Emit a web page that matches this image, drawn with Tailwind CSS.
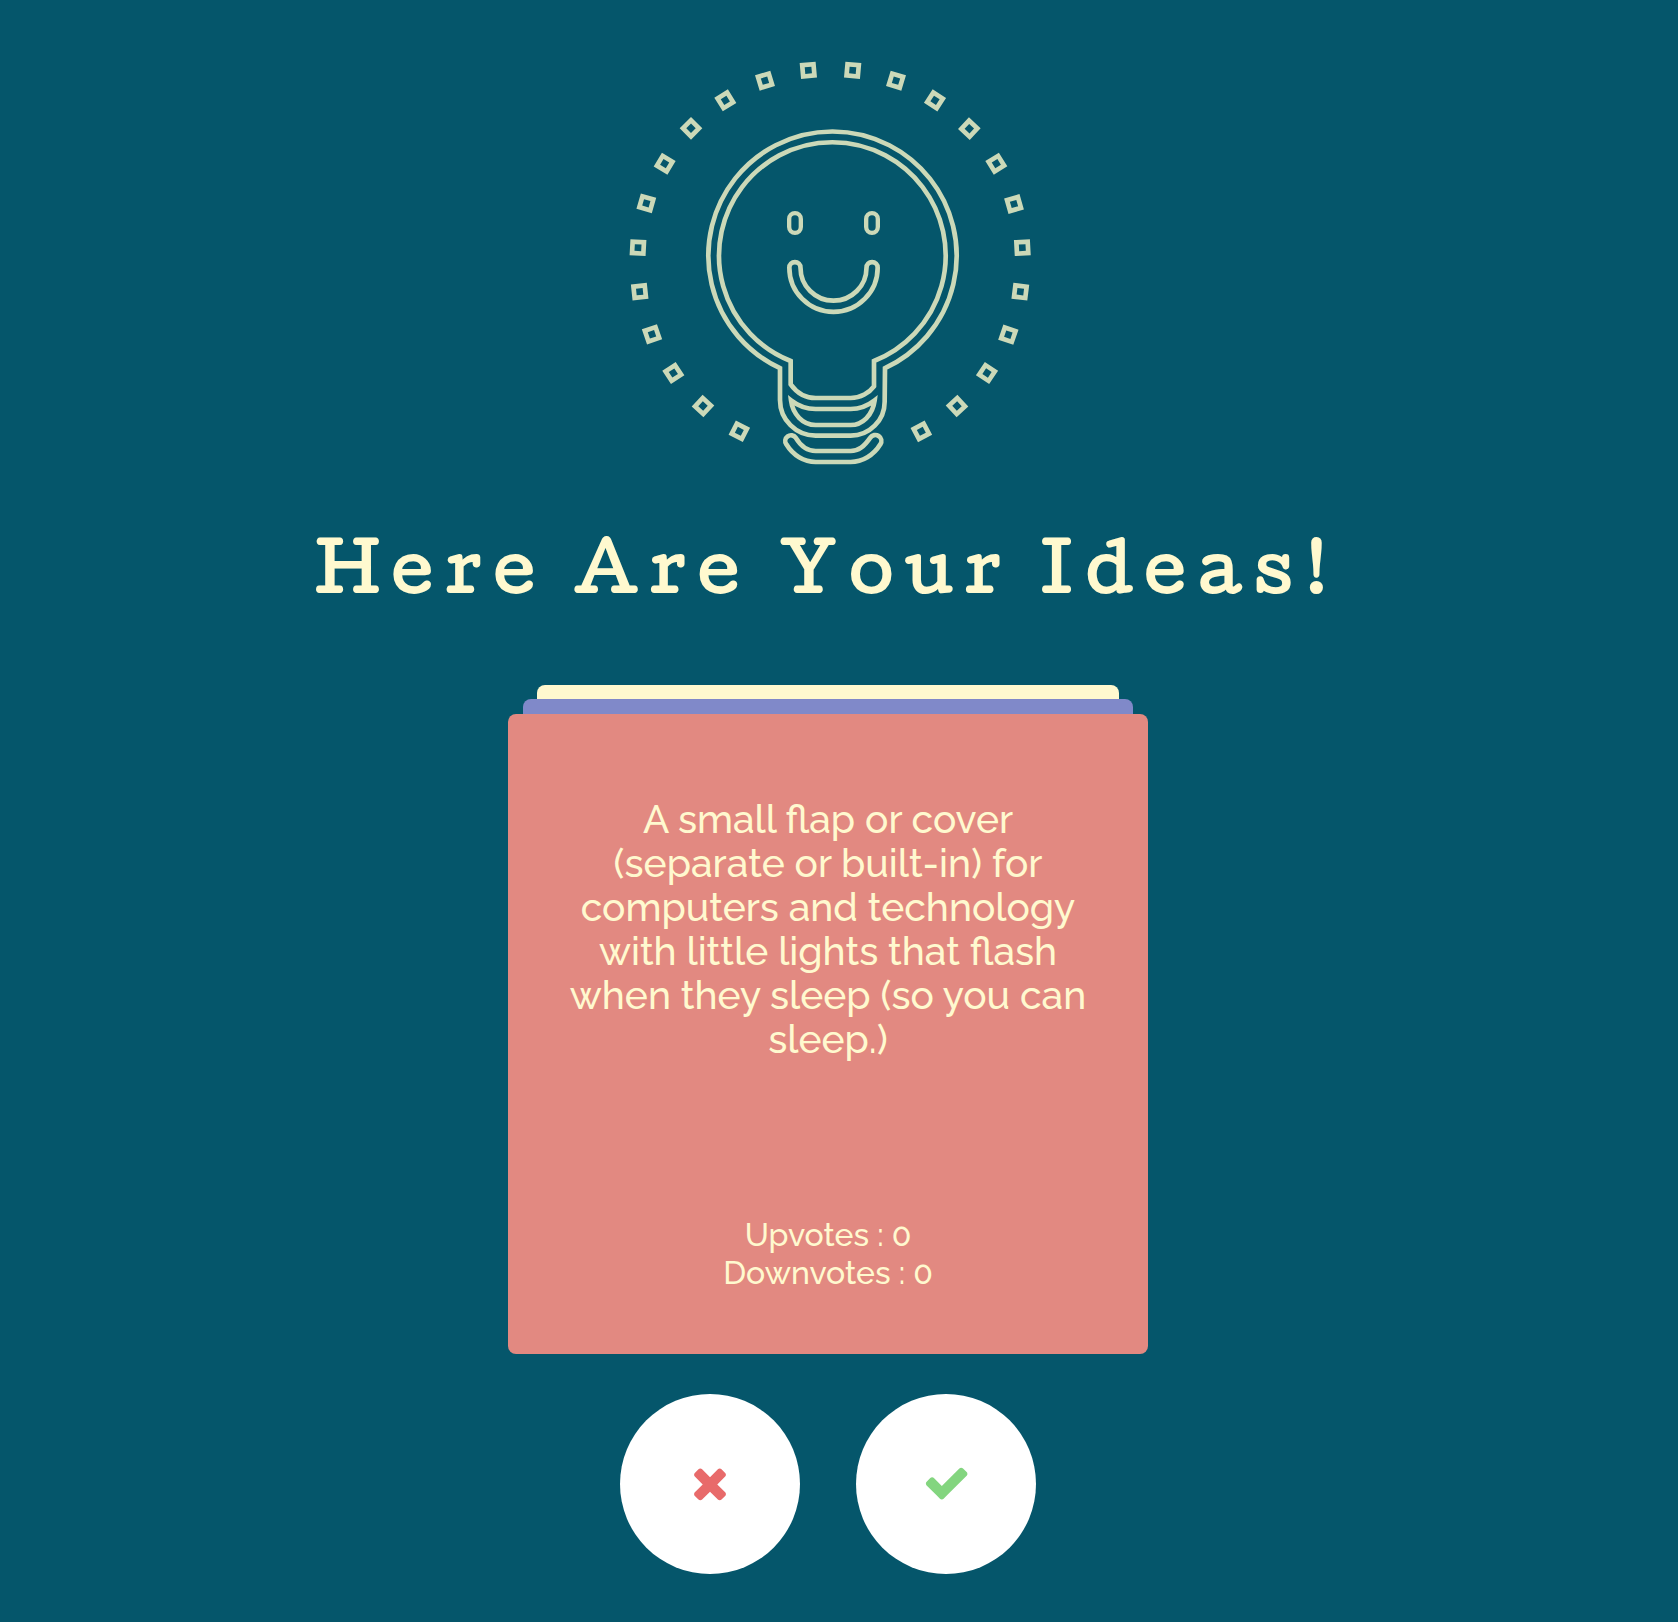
<!DOCTYPE html>
<html lang="en">
<head>
  <meta charset="UTF-8" />
  <meta name="viewport" content="width=device-width, initial-scale=1.0"/>
  <title>Here Are Your Ideas!</title>
  <script src="https://cdn.jsdelivr.net/npm/@tailwindcss/browser@4"></script>
</head>
<body class="bg-[#05566b] min-h-screen flex flex-col items-center pt-10 pr-[22px] pb-12 border-b border-[#04465c] text-[#fff9cf] font-medium font-[Raleway,Lato,sans-serif]">

  <!-- Logo -->
  <svg class="w-[436px] max-w-full" viewBox="0 0 1308 1320" fill="none" stroke="#ccd9b8" stroke-width="14" role="img" aria-label="Smiling light bulb">
    <!-- Bulb -->
    <path d="M510 984.6A372.5 372.5 0 1 1 825 984.6L824 1085A102 102 0 0 1 722 1187H617A107 107 0 0 1 510 1080Z"/>
    <path d="M542 963A340 340 0 1 1 792 963V1039C778 1058 752 1074 722 1074H617C587 1074 560 1058 542 1033Z"/>
    <path d="M543 1081C565 1098 590 1107 617 1107H722C747 1107 772 1098 794 1081C788 1126 757 1155 722 1155H617C578 1155 548 1122 543 1081Z"/>
    <path d="M557 1193C573 1220 592 1233 617 1233H722C746 1233 762 1220 781 1193A17 17 0 0 1 811 1213C791 1246 757 1266 722 1266H617C582 1266 549 1246 529 1213A17 17 0 0 1 557 1193Z"/>
    <!-- Face -->
    <rect x="537.5" y="519.5" width="35" height="59" rx="17.5" stroke-width="13"/>
    <rect x="768.5" y="519.5" width="35" height="59" rx="17.5" stroke-width="13"/>
    <path d="M538 683A16.5 16.5 0 0 1 571.5 683A99 99 0 0 0 769.5 683A16.5 16.5 0 0 1 803 683A132.5 132.5 0 0 1 538 683Z"/>
    <!-- Rays -->
    <g id="rays"></g>
  </svg>

  <h1 class="mt-10 text-[64px] leading-[92px] tracking-[0.2em] text-center font-bold font-[Cutive,'DejaVu_Serif',serif]">Here Are Your Ideas!</h1>

  <!-- Idea Cards -->
  <main class="mt-[73px] w-full max-w-[640px] flex flex-col items-center">
    <div class="w-[582px] max-w-[91%] h-[14px] rounded-t-lg bg-[#fff9cf]"></div>
    <div class="w-[610px] max-w-[96%] h-[15px] rounded-t-lg bg-[#8089c9]"></div>
    <article class="w-full min-h-[640px] rounded-lg bg-[#e28981] px-14 pt-[83px] pb-[62px] flex flex-col justify-between text-center">
      <p class="text-[39px] leading-[44px]">A small flap or cover (separate or built-in) for computers and technology with little lights that flash when they sleep (so you can sleep.)</p>
      <div class="text-[32px] leading-[38px]">
        <p>Upvotes : <span id="upvotes">0</span></p>
        <p>Downvotes : <span id="downvotes">0</span></p>
      </div>
    </article>
  </main>

  <!-- Vote Buttons -->
  <div class="mt-10 flex gap-14">
    <button id="down-btn" type="button" aria-label="Downvote" class="size-[180px] rounded-full bg-white text-[#e86a6a] flex items-center justify-center cursor-pointer">
      <svg class="size-12" viewBox="0 48 1792 1792" fill="currentColor"><path d="M1490 1322q0 40-28 68l-136 136q-28 28-68 28t-68-28l-294-294-294 294q-28 28-68 28t-68-28l-136-136q-28-28-28-68t28-68l294-294-294-294q-28-28-28-68t28-68l136-136q28-28 68-28t68 28l294 294 294-294q28-28 68-28t68 28l136 136q28 28 28 68t-28 68l-294 294 294 294q28 28 28 68z"/></svg>
    </button>
    <button id="up-btn" type="button" aria-label="Upvote" class="size-[180px] rounded-full bg-white text-[#83d57f] flex items-center justify-center cursor-pointer">
      <svg class="size-12" viewBox="-24 48 1792 1792" fill="currentColor"><path d="M1671 566q0 40-28 68l-724 724-136 136q-28 28-68 28t-68-28l-136-136-362-362q-28-28-28-68t28-68l136-136q28-28 68-28t68 28l294 295 656-657q28-28 68-28t68 28l136 136q28 28 28 68z"/></svg>
    </button>
  </div>

  <script>
    // x, y, rotation of each ray around the bulb
    const rays = [
      [388, 1174, 27], [279, 1098, 43], [190, 999, -33], [126, 883, -19], [89, 755, -6],
      [84, 623, 3], [109, 490, 16], [164, 371, 31], [243, 265, 45], [346, 181, -32],
      [465, 122, -17], [595, 91, -5], [728, 91, 5], [858, 122, 17], [975, 181, 33],
      [1078, 266, 43], [1159, 371, -32], [1212, 492, -16], [1237, 623, -3], [1231, 755, 7],
      [1195, 884, 19], [1131, 999, 34], [1041, 1098, -43], [934, 1174, -28]
    ];

    document.getElementById("rays").innerHTML = rays.map(([x, y, r]) =>
      `<rect x="${x - 17}" y="${y - 17}" width="34" height="34" transform="rotate(${r} ${x} ${y})"/>`
    ).join("");

    function addVote(id) {
      const count = document.getElementById(id);
      count.textContent = Number(count.textContent) + 1;
    }

    document.getElementById("up-btn").addEventListener("click", () => addVote("upvotes"));
    document.getElementById("down-btn").addEventListener("click", () => addVote("downvotes"));
  </script>
</body>
</html>
